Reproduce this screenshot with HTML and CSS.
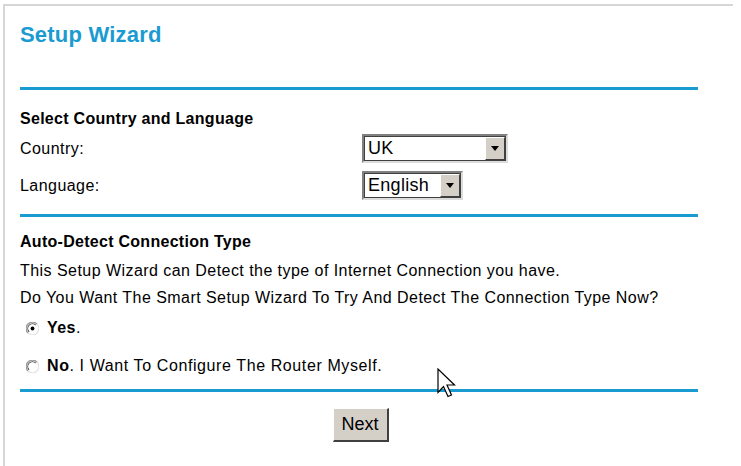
FILE: index.html
```html
<!DOCTYPE html>
<html>
<head>
<meta charset="utf-8">
<link rel="stylesheet" href="styles.css">
</head>
<body>
<div class="frame">
  <h1 class="title">Setup Wizard</h1>
  <div class="rule rule-first"></div>
  <div class="section section-country">
    <div class="heading">Select Country and Language</div>
    <div class="field">
      <span class="label">Country:</span>
      <div class="select select-wide"><span class="select-value">UK</span><span class="select-btn"><span class="tri"></span></span></div>
    </div>
    <div class="field">
      <span class="label">Language:</span>
      <div class="select select-narrow"><span class="select-value">English</span><span class="select-btn"><span class="tri"></span></span></div>
    </div>
  </div>
  <div class="rule"></div>
  <div class="section section-detect">
    <div class="heading">Auto-Detect Connection Type</div>
    <div class="lines">
      <div class="line">This Setup Wizard can Detect the type of Internet Connection you have.</div>
      <div class="line">Do You Want The Smart Setup Wizard To Try And Detect The Connection Type Now?</div>
    </div>
    <div class="radio-row radio-row-yes">
      <svg class="radio" width="13" height="13" viewBox="0 0 13 13">
        <path d="M11 2A6 6 0 0 0 2 11" fill="none" stroke="#9a9a9a" stroke-width="1.3"/>
        <path d="M2 11A6 6 0 0 0 11 2" fill="none" stroke="#e4e4e4" stroke-width="1.3"/>
        <path d="M9.8 3.2A4.6 4.6 0 0 0 3.2 9.8" fill="none" stroke="#505050" stroke-width="1.1"/>
        <circle cx="6.5" cy="6.5" r="3.9" fill="#fff"/>
        <circle cx="6.5" cy="6.5" r="1.9" fill="#000"/>
      </svg>
      <span><b>Yes</b>.</span>
    </div>
    <div class="radio-row radio-row-no">
      <svg class="radio" width="13" height="13" viewBox="0 0 13 13">
        <path d="M11 2A6 6 0 0 0 2 11" fill="none" stroke="#9a9a9a" stroke-width="1.3"/>
        <path d="M2 11A6 6 0 0 0 11 2" fill="none" stroke="#e4e4e4" stroke-width="1.3"/>
        <path d="M9.8 3.2A4.6 4.6 0 0 0 3.2 9.8" fill="none" stroke="#505050" stroke-width="1.1"/>
        <circle cx="6.5" cy="6.5" r="3.9" fill="#fff"/>
      </svg>
      <span><b>No</b>. I Want To Configure The Router Myself.</span>
    </div>
  </div>
  <div class="rule"></div>
  <div class="actions">
    <div class="button">Next</div>
  </div>
  <svg class="cursor" width="19" height="31" viewBox="0 0 19 31">
    <path d="M1 1 L1 24.5 L6.5 18.5 L11 28.5 L14.5 27 L10 17 L17.5 17 Z" fill="#fff" stroke="#000" stroke-width="1.2" stroke-linejoin="miter"/>
  </svg>
</div>
</body>
</html>
```

FILE: styles.css
```css
html, body {
  margin: 0;
  padding: 0;
  background: #fff;
}
body {
  font-family: "Liberation Sans", Arial, sans-serif;
  color: #000;
  width: 741px;
  height: 466px;
  overflow: hidden;
}
.frame {
  position: relative;
  margin: 4px 0 0 3px;
  width: 678px;
  height: 470px;
  border-left: 2px solid #d6d6d6;
  border-top: 2px solid #d6d6d6;
  padding-left: 15px;
  padding-right: 35px;
}
.title {
  margin: 0;
  padding-top: 16px;
  font-size: 22px;
  line-height: 26px;
  font-weight: bold;
  letter-spacing: 0.2px;
  color: #1a9bd1;
}
.rule {
  height: 3px;
  background: #1a9bd1;
  width: 678px;
}
.rule-first {
  margin-top: 39px;
}
.section-country {
  padding: 20px 0 10px;
}
.section-detect {
  padding: 16px 0 8px;
}
.heading {
  font-size: 16px;
  font-weight: bold;
  letter-spacing: 0.28px;
  line-height: 18px;
  height: 20px;
}
.field {
  display: flex;
  align-items: center;
  height: 37px;
  font-size: 16px;
  letter-spacing: 0.45px;
}
.label {
  width: 342px;
}
.lines {
  padding-top: 4px;
}
.line {
  font-size: 16px;
  letter-spacing: 0.45px;
  line-height: 27px;
}
.select {
  display: flex;
  align-items: stretch;
  height: 29px;
  border-top: 2px solid #808080;
  border-left: 2px solid #808080;
  border-right: 2px solid #dcdcdc;
  border-bottom: 2px solid #dcdcdc;
  background: #fff;
  box-sizing: border-box;
  outline: 1px solid #404040;
  outline-offset: -3px;
  letter-spacing: 0.3px;
}
.select-wide { width: 146px; }
.select-narrow { width: 101px; }
.select-value {
  flex: 1;
  font-size: 18px;
  line-height: 25px;
  padding-left: 4px;
}
.select-btn {
  width: 20px;
  margin: 1px;
  background: #d4d0c8;
  border-top: 1px solid #fff;
  border-left: 1px solid #fff;
  border-right: 1px solid #404040;
  border-bottom: 1px solid #404040;
  box-sizing: border-box;
  display: flex;
  align-items: center;
  justify-content: center;
}
.tri {
  width: 0;
  height: 0;
  border-left: 4px solid transparent;
  border-right: 4px solid transparent;
  border-top: 5px solid #000;
}
.radio-row {
  display: flex;
  align-items: center;
  gap: 8px;
  font-size: 16px;
  letter-spacing: 0.45px;
  height: 30px;
  padding-left: 6px;
}
.radio-row-yes {
  margin-top: 2px;
}
.radio-row-no {
  margin-top: 8px;
  letter-spacing: 0.6px;
}
.actions {
  display: flex;
  justify-content: center;
  padding-top: 16px;
  width: 678px;
}
.button {
  width: 56px;
  height: 34px;
  box-sizing: border-box;
  background: #d4d0c8;
  border-top: 1px solid #fff;
  border-left: 1px solid #fff;
  border-right: 2px solid #404040;
  border-bottom: 2px solid #404040;
  font-size: 18px;
  line-height: 30px;
  text-align: center;
  margin-left: 3px;
}
.cursor {
  position: absolute;
  left: 432px;
  top: 362px;
}
```
